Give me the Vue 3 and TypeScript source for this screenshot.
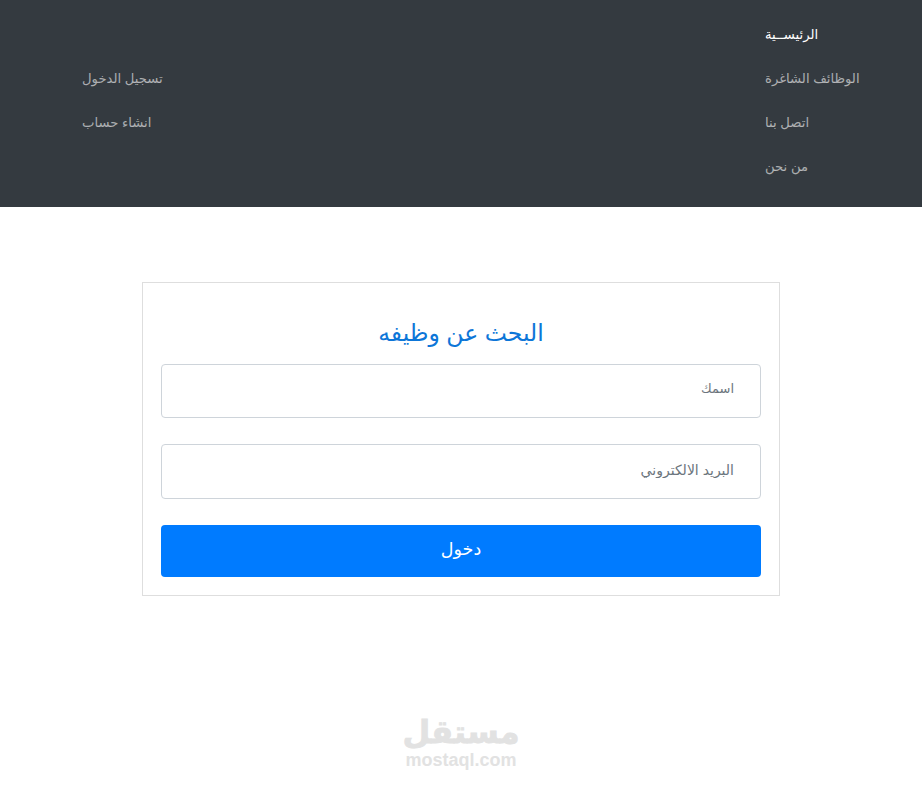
<script setup lang="ts">
const mainLinks: string[] = ['الرئيســية', 'الوظائف الشاغرة', 'اتصل بنا', 'من نحن']
const accountLinks: string[] = ['تسجيل الدخول', 'انشاء حساب']
</script>

<template>
  <div class="page">
    <header class="navbar">
      <ul class="links account">
        <li v-for="l in accountLinks" :key="l">{{ l }}</li>
      </ul>
      <ul class="links main">
        <li v-for="(l, i) in mainLinks" :key="l" :class="{ active: i === 0 }">{{ l }}</li>
      </ul>
    </header>
    <main class="content">
      <form class="card" @submit.prevent>
        <h2 class="title">البحث عن وظيفه</h2>
        <input class="field first" dir="rtl" type="text" placeholder="اسمك" />
        <input class="field second" dir="rtl" type="email" placeholder="البريد الالكتروني" />
        <button class="submit" type="submit">دخول</button>
      </form>
    </main>
    <footer class="logo">
      <div class="logo-ar">مستقل</div>
      <div class="logo-en">mostaql.com</div>
    </footer>
  </div>
</template>

<style>
body { margin: 0; background: #fff; }
</style>

<style scoped>
.page {
  width: 922px;
  height: 786px;
  overflow: hidden;
  font-family: "Liberation Sans", Arial, "DejaVu Sans", sans-serif;
  display: flex;
  flex-direction: column;
}
.navbar {
  background: #343a40;
  height: 207px;
  box-sizing: border-box;
  padding: 13px 62px 0 82px;
  display: flex;
  justify-content: space-between;
  align-items: flex-start;
}
.links {
  list-style: none;
  margin: 0;
  padding: 0;
  font-size: 13.2px;
  color: rgba(255, 255, 255, 0.6);
}
.links li {
  height: 44px;
  line-height: 44px;
  text-align: left;
  white-space: nowrap;
}
.account { padding-top: 44px; }
.main { width: 95px; }
.active { color: #fff; }
.content {
  padding-top: 75px;
  display: flex;
  justify-content: center;
}
.card {
  width: 638px;
  height: 314px;
  box-sizing: border-box;
  border: 1px solid #dedede;
  padding: 18px;
  display: flex;
  flex-direction: column;
}
.title {
  margin: 0;
  height: 63px;
  line-height: 65px;
  text-align: center;
  font-size: 23.5px;
  font-weight: 400;
  color: #0d76d8;
}
.field {
  display: block;
  box-sizing: border-box;
  width: 600px;
  height: 54px;
  border: 1px solid #ced4da;
  border-radius: 4px;
  padding: 0 26px 4px;
  font: inherit;
  font-size: 14px;
  background: #fff;
  outline: none;
}
.field::placeholder { color: #6c757d; opacity: 1; }
.first { margin-bottom: 26px; font-size: 13px; padding-bottom: 6px; }
.second { height: 55px; margin-bottom: 26px; }
.submit {
  width: 600px;
  height: 52px;
  border: 0;
  border-radius: 4px;
  background: #007bff;
  color: #fff;
  font: inherit;
  font-size: 17.5px;
  padding: 0 0 3px;
}
.logo {
  margin-top: 116px;
  text-align: center;
  color: #e2e2e2;
  font-weight: 700;
}
.logo-ar {
  font-size: 32px;
  line-height: 40px;
  -webkit-text-stroke: 0.8px #e2e2e2;
}
.logo-en {
  font-size: 18px;
  line-height: 16px;
}
</style>
